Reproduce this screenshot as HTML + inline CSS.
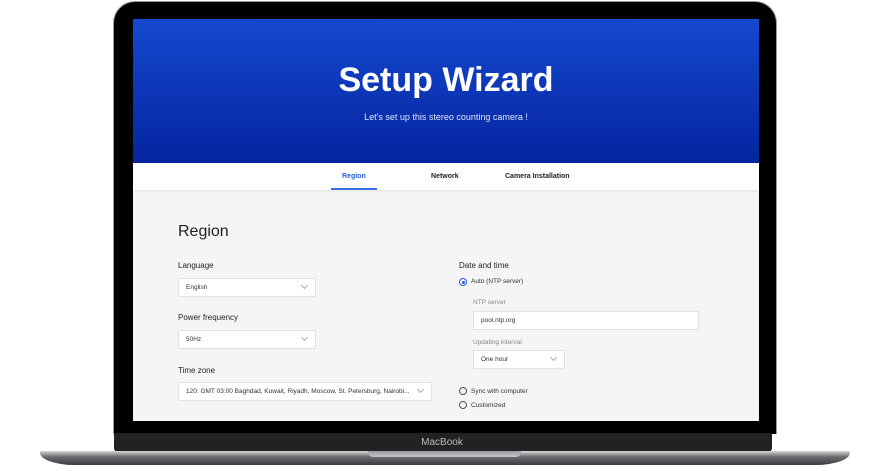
<!DOCTYPE html>
<html><head><meta charset="utf-8"><style>
*{margin:0;padding:0;box-sizing:border-box}
body{width:884px;height:471px;background:#fff;position:relative;overflow:hidden;font-family:"Liberation Sans",sans-serif}
.a{position:absolute}
.bez{left:113px;top:1px;width:664px;height:433px;background:#000;border-radius:22px 22px 0 0;border:1.5px solid #9a9a9a;border-bottom:none}
.scr{left:133px;top:19px;width:626px;height:402px;background:#f5f5f5;overflow:hidden}
.hdr{left:0;top:0;width:626px;height:144px;background:linear-gradient(#1549cf,#0424a0)}
.tabs{left:0;top:144px;width:626px;height:27px;background:#fff;box-shadow:0 1px 2px rgba(0,0,0,.08)}
.lab{font-size:8px;color:#222}
.sel{background:#fff;border:1px solid #e2e2e2;font-size:6.5px;color:#333;padding-left:7px;line-height:17px;height:19px}
.sel i{position:absolute;right:8px;top:4px;width:5px;height:5px;border-right:1px solid #aaa;border-bottom:1px solid #aaa;transform:rotate(45deg)}
.rad{width:8px;height:8px;border:1px solid #555;border-radius:50%}
.sm{font-size:6.5px;color:#333}
</style></head><body>
<div class="a bez"></div>
<div class="a" style="left:114px;top:433px;width:658px;height:19px;background:#222;border-radius:0 0 4px 4px"></div>
<div class="a" style="left:0;top:437px;width:884px;text-align:center;font-size:10px;color:#bbb">MacBook</div>
<div class="a" style="left:40px;top:451px;width:810px;height:14px;background:linear-gradient(#d8d8da,#6e6e72 40%,#3a3a3e);border-radius:2px 2px 40px 40px/2px 2px 14px 14px"></div>
<div class="a" style="left:368px;top:451px;width:153px;height:6px;background:linear-gradient(#9a9a9e,#c8c8cc);border-radius:0 0 5px 5px"></div>
<div class="a scr">
 <div class="a hdr">
  <div class="a" style="left:0;top:42px;width:626px;text-align:center;color:#fff;font-size:34px;font-weight:bold">Setup Wizard</div>
  <div class="a" style="left:0;top:93px;width:626px;text-align:center;color:#dfe6ff;font-size:9px">Let's set up this stereo counting camera !</div>
 </div>
 <div class="a tabs">
  <div class="a" style="left:209px;top:10px;font-size:7px;font-weight:bold;color:#2a5fd8">Region</div>
  <div class="a" style="left:198px;top:25px;width:46px;height:2px;background:#3a70e0"></div>
  <div class="a" style="left:298px;top:10px;font-size:7px;font-weight:bold;color:#222">Network</div>
  <div class="a" style="left:372px;top:10px;font-size:7px;font-weight:bold;color:#222">Camera Installation</div>
 </div>
 <div class="a" style="left:45px;top:204px;font-size:16px;color:#222">Region</div>
 <div class="a lab" style="left:45px;top:242px">Language</div>
 <div class="a sel" style="left:45px;top:259px;width:138px">English<i></i></div>
 <div class="a lab" style="left:45px;top:294px">Power frequency</div>
 <div class="a sel" style="left:45px;top:311px;width:138px">50Hz<i></i></div>
 <div class="a lab" style="left:45px;top:347px">Time zone</div>
 <div class="a sel" style="left:45px;top:363px;width:254px">120: GMT 03:00 Baghdad, Kuwait, Riyadh, Moscow, St. Petersburg, Nairobi...<i></i></div>
 <div class="a lab" style="left:326px;top:242px">Date and time</div>
 <div class="a rad" style="left:326px;top:259px;border-color:#2a5fd8"><div style="margin:1.5px;width:3px;height:3px;border-radius:50%;background:#2a5fd8"></div></div>
 <div class="a sm" style="left:338px;top:259px">Auto (NTP server)</div>
 <div class="a sm" style="left:340px;top:280px;color:#888">NTP server</div>
 <div class="a sel" style="left:340px;top:292px;width:226px;height:19px">pool.ntp.org</div>
 <div class="a sm" style="left:340px;top:320px;color:#888">Updating interval</div>
 <div class="a sel" style="left:340px;top:331px;width:92px">One hour<i></i></div>
 <div class="a rad" style="left:326px;top:368px"></div>
 <div class="a sm" style="left:338px;top:369px">Sync with computer</div>
 <div class="a rad" style="left:326px;top:382px"></div>
 <div class="a sm" style="left:338px;top:383px">Customized</div>
</div>
</body></html>
